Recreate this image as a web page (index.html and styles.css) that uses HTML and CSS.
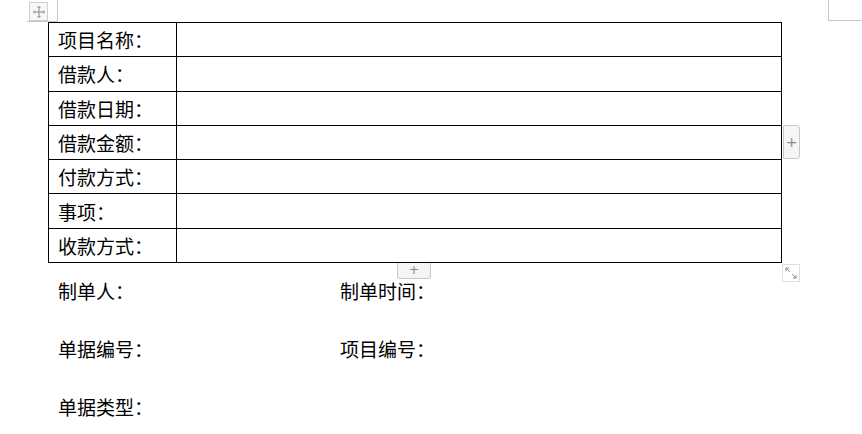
FILE: index.html
```html
<!DOCTYPE html>
<html lang="zh-CN">
<head>
<meta charset="utf-8">
<link rel="stylesheet" href="styles.css">
</head>
<body>
<div class="page">
  <span class="corner corner-left"></span>
  <span class="corner corner-right"></span>
  <span class="move-handle">
    <svg width="14" height="14" viewBox="0 0 14 14" fill="none" stroke="#8a8a8a" stroke-width="1">
      <path d="M7 1.5v11M1.5 7h11"/>
      <path d="M5.5 3L7 1.5 8.5 3M5.5 11L7 12.5 8.5 11M3 5.5L1.5 7 3 8.5M11 5.5L12.5 7 11 8.5"/>
    </svg>
  </span>
  <div class="table-wrap">
    <table class="form-table">
      <tr><td class="label">项目名称：</td><td></td></tr>
      <tr><td class="label">借款人：</td><td></td></tr>
      <tr><td class="label">借款日期：</td><td></td></tr>
      <tr><td class="label">借款金额：</td><td></td></tr>
      <tr><td class="label">付款方式：</td><td></td></tr>
      <tr><td class="label">事项：</td><td></td></tr>
      <tr><td class="label">收款方式：</td><td></td></tr>
    </table>
    <span class="add-col">+</span>
    <span class="add-row">+</span>
    <span class="resize">
      <svg width="16" height="16" viewBox="0 0 16 16" fill="none" stroke="#8c8c8c" stroke-width="1">
        <path d="M3 3l4 4M3 3h3M3 3v3"/>
        <path d="M13 13L9 9M13 13h-3M13 13v-3"/>
      </svg>
    </span>
  </div>
  <div class="info">
    <div class="info-item">制单人：</div>
    <div class="info-item">制单时间：</div>
    <div class="info-item">单据编号：</div>
    <div class="info-item">项目编号：</div>
    <div class="info-item">单据类型：</div>
  </div>
</div>
</body>
</html>
```
FILE: styles.css
```css
html, body {
  margin: 0;
  padding: 0;
  background: #ffffff;
}
body {
  font-family: "Noto Sans CJK SC", "Microsoft YaHei", sans-serif;
  font-size: 19px;
  color: #000;
  width: 862px;
  height: 434px;
  overflow: hidden;
}
.page {
  position: relative;
  padding-top: 22px;
  padding-left: 48px;
}
.corner {
  position: absolute;
  top: 0;
  width: 30px;
  height: 21px;
  border-color: #c6c6c6;
  border-style: solid;
  border-width: 0;
}
.corner-left {
  left: 27px;
  border-right-width: 1px;
  border-bottom-width: 1px;
}
.corner-right {
  left: 828px;
  width: 34px;
  height: 20px;
  border-left-width: 1px;
  border-bottom-width: 1px;
}
.move-handle {
  position: absolute;
  left: 29px;
  top: 2px;
  width: 17px;
  height: 17px;
  border: 1px solid #cfcfcf;
  background: #f7f7f7;
  display: flex;
  align-items: center;
  justify-content: center;
}
.table-wrap {
  position: relative;
  width: 734px;
}
.form-table {
  border-collapse: collapse;
  width: 734px;
  table-layout: fixed;
}
.form-table td {
  border: 1px solid #000;
  height: 33.3px;
  padding: 0;
  line-height: 1;
}
.form-table td.label {
  width: 118px;
  padding-left: 9px;
}
.add-col {
  position: absolute;
  left: 735px;
  top: 103px;
  width: 15px;
  height: 32px;
  background: #f5f5f5;
  border: 1px solid #c9c9c9;
  border-radius: 0 3px 3px 0;
  color: #8a8a8a;
  font-family: "DejaVu Sans", sans-serif;
  font-size: 14px;
  display: flex;
  align-items: center;
  justify-content: center;
}
.add-row {
  position: absolute;
  left: 349px;
  top: 241px;
  width: 32px;
  height: 15px;
  background: #f5f5f5;
  border: 1px solid #c9c9c9;
  border-top: none;
  border-radius: 0 0 3px 3px;
  color: #8a8a8a;
  font-family: "DejaVu Sans", sans-serif;
  font-size: 13px;
  line-height: 14px;
  text-align: center;
}
.resize {
  position: absolute;
  left: 734px;
  top: 242px;
  width: 16px;
  height: 16px;
  border: 1px solid #e0e0e0;
  display: flex;
  align-items: center;
  justify-content: center;
}
.info {
  display: grid;
  grid-template-columns: 282px auto;
  grid-auto-rows: 58px;
  padding-left: 10px;
}
.info-item {
  display: flex;
  align-items: center;
  line-height: 1;
  padding-bottom: 3px;
}
```
